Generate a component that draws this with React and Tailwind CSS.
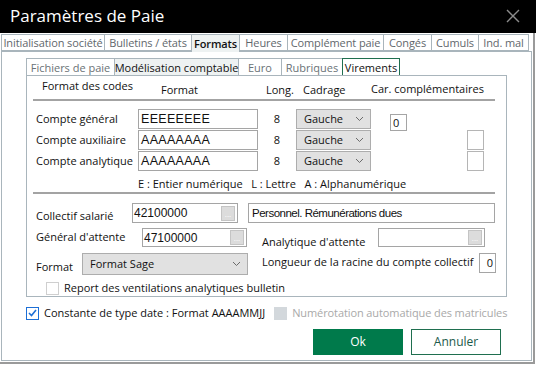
import React from 'react';

const FONT = { fontFamily: '"Open Sans", "Noto Sans", sans-serif' };
const MONO = { fontFamily: '"Liberation Sans", sans-serif' };

const Chevron = () => (
  <svg width="9" height="6" viewBox="0 0 9 6" className="shrink-0">
    <path d="M1 1 L4.5 4.5 L8 1" fill="none" stroke="#6b6b6b" strokeWidth="1" />
  </svg>
);

const DotsButton = () => (
  <div className="flex items-end justify-center w-[14px] h-[15px] bg-[#dcdcdc] border border-[#c4c4c4] text-[8px] leading-[8px] text-white pb-[2px]">
    ...
  </div>
);

const Select = ({ value, className = '' }) => (
  <div
    className={`flex items-center justify-between bg-[#e1e1e1] border border-[#adadad] pl-[7px] pr-[6px] text-[11px] text-[#111] ${className}`}
  >
    <span>{value}</span>
    <Chevron />
  </div>
);

const outerTabs = [
  { label: 'Initialisation société', w: 104 },
  { label: 'Bulletins / états', w: 87 },
  { label: 'Formats', w: 48, active: true },
  { label: 'Heures', w: 48 },
  { label: 'Complément paie', w: 96 },
  { label: 'Congés', w: 48 },
  { label: 'Cumuls', w: 47 },
  { label: 'Ind. mal', w: 50 },
];

const subTabs = [
  { label: 'Fichiers de paie', w: 89 },
  { label: 'Modélisation comptable', w: 124, active: true },
  { label: 'Euro', w: 43 },
  { label: 'Rubriques', w: 61 },
  { label: 'Virements', w: 58, focus: true },
];

const codeRows = [
  { label: 'Compte général', value: 'EEEEEEEE' },
  { label: 'Compte auxiliaire', value: 'AAAAAAAA' },
  { label: 'Compte analytique', value: 'AAAAAAAA' },
];

export default function App() {
  return (
    <div className="relative w-[536px] h-[366px] bg-white overflow-hidden" style={FONT}>
      {/* title bar */}
      <div className="flex items-center justify-between h-[33px] bg-black pl-[10px] pr-[16px]">
        <span className="text-white text-[17px] leading-none pb-[3px]">Paramètres de Paie</span>
        <svg width="14" height="14" viewBox="0 0 14 14" className="mb-[2px]">
          <path d="M1 1 L13 13 M13 1 L1 13" stroke="#8c8c8c" strokeWidth="1.4" />
        </svg>
      </div>

      <div className="flex flex-col w-[535px] h-[331px] border-r-[2px] border-b-[2px] border-[#9a9a9a]">
        {/* outer tabs */}
        <div className="flex pl-[1px] pt-[1px] h-[18px]">
          {outerTabs.map((t, i) => (
            <div
              key={t.label}
              style={{ width: t.w }}
              className={`flex items-center justify-center h-[17px] border-t border-r border-[#a9b5bc] text-[11px] leading-none whitespace-nowrap tracking-[-0.1px] ${
                i === 0 ? 'border-l' : ''
              } ${
                t.active ? 'bg-[#eef2f2] text-[#111] font-semibold h-[18px] relative z-10' : 'text-[#5f676c] border-b'
              }`}
            >
              {t.label}
            </div>
          ))}
        </div>

        {/* outer panel */}
        <div className="flex flex-col ml-[1px] w-[531px] h-[310px] border border-[#a9b5bc] pl-[24px]">
          {/* sub tabs */}
          <div className="flex mt-[6px] h-[17px]">
            {subTabs.map((t, i) => (
              <div
                key={t.label}
                style={{ width: t.w }}
                className={`flex items-center justify-center h-[17px] border-t border-r text-[11px] leading-none whitespace-nowrap ${
                  i === 0 ? 'border-l' : ''
                } ${t.focus ? 'border-l border-[#1f6f4f] -ml-[1px]' : 'border-[#a9b5bc]'} ${
                  t.active ? 'bg-[#eef2f2] text-[#111]' : t.focus ? 'text-[#111]' : 'text-[#6a7276]'
                }`}
              >
                {t.label}
              </div>
            ))}
          </div>

          {/* sub panel */}
          <div className="flex flex-col w-[481px] h-[222px] border border-[#a9b5bc] text-[11px] text-[#111]">
            {/* header */}
            <div className="flex h-[23px] pl-[15px] font-medium">
              <span className="w-[119px] pt-[1px] leading-[18px]">Format des codes</span>
              <span className="w-[105px] pt-[5px] leading-[18px]">Format</span>
              <span className="w-[37px] pt-[5px] leading-[18px]">Long.</span>
              <span className="w-[68px] pt-[5px] leading-[18px]">Cadrage</span>
              <span className="pt-[4px] leading-[18px]">Car. complémentaires</span>
            </div>
            <div className="ml-[6px] w-[462px] h-[2px] bg-[#a3a3a3]" />

            {/* code rows */}
            <div className="flex flex-col gap-[1px] mt-[8px] pl-[9px]">
              {codeRows.map((r, i) => (
                <div key={r.label} className="flex items-start h-[20px]">
                  <span className="w-[102px] leading-[20px] whitespace-nowrap">{r.label}</span>
                  <div
                    className="w-[120px] h-[20px] border border-[#a5a5a5] pl-[2px] leading-[18px] text-[12.5px] tracking-[0.3px]"
                    style={MONO}
                  >
                    {r.value}
                  </div>
                  <span className="w-[38px] text-center leading-[20px]">8</span>
                  <Select value="Gauche" className="w-[75px] h-[20px]" />
                  {i === 0 ? (
                    <div className="ml-[19px] mt-[5px] w-[17px] h-[17px] border border-[#a5a5a5] pl-[2px] leading-[15px]">
                      0
                    </div>
                  ) : (
                    <div className="ml-[96px] w-[17px] h-[20px] border border-[#b5b5b5]" />
                  )}
                </div>
              ))}
            </div>

            {/* legend */}
            <div className="mt-[6px] h-[14px] leading-[14px] pl-[111px] whitespace-pre">
              {'E : Entier numérique   L : Lettre   A : Alphanumérique'}
            </div>
            <div className="mt-[1px] ml-[6px] w-[462px] h-[2px] bg-[#a3a3a3]" />

            {/* collectif */}
            <div className="flex items-start mt-[9px] pl-[9px] h-[20px]">
              <span className="w-[96px] pt-[3px] leading-[20px] whitespace-nowrap">Collectif salarié</span>
              <div className="flex items-center justify-between w-[106px] h-[20px] border border-[#a5a5a5] pl-[1px] pr-[2px] text-[12px]">
                <span style={MONO}>42100000</span>
                <DotsButton />
              </div>
              <div
                className="ml-[10px] w-[247px] h-[20px] border border-[#a5a5a5] pl-[3px] leading-[18px] text-[11.5px] tracking-[-0.5px]"
                style={MONO}
              >
                Personnel. Rémunérations dues
              </div>
            </div>

            {/* general / analytique */}
            <div className="flex items-start mt-[5px] pl-[9px] h-[20px]">
              <span className="w-[106px] leading-[18px] whitespace-nowrap">Général d'attente</span>
              <div className="flex items-center justify-between w-[105px] h-[19px] border border-[#a5a5a5] pl-[1px] pr-[2px] text-[12px]">
                <span style={MONO}>47100000</span>
                <DotsButton />
              </div>
              <span className="ml-[15px] w-[116px] pt-[5px] leading-[18px] whitespace-nowrap">Analytique d'attente</span>
              <div className="flex items-center justify-end w-[107px] h-[19px] border border-[#a5a5a5] pr-[2px]">
                <DotsButton />
              </div>
            </div>

            {/* format / longueur */}
            <div className="flex items-start mt-[5px] pl-[9px] h-[23px]">
              <span className="w-[46px] pt-[5px] leading-[18px]">Format</span>
              <Select value="Format Sage" className="w-[166px] h-[22px]" />
              <span className="ml-[14px] w-[217px] leading-[18px] whitespace-nowrap">
                Longueur de la racine du compte collectif
              </span>
              <div className="w-[17px] h-[20px] border border-[#a5a5a5] pr-[2px] text-right leading-[18px]">0</div>
            </div>

            {/* report */}
            <div className="flex items-center mt-[5px] pl-[19px] h-[14px]">
              <div className="w-[13px] h-[13px] border border-[#cfcfcf]" />
              <span className="ml-[5px] leading-[14px]">Report des ventilations analytiques bulletin</span>
            </div>
          </div>

          {/* checkboxes */}
          <div className="flex items-center mt-[9px] h-[14px] text-[11px] whitespace-nowrap">
            <div className="flex items-center justify-center w-[13px] h-[13px] border border-[#1d6fd6]">
              <svg width="9" height="8" viewBox="0 0 9 8">
                <path d="M1 4 L3.5 6.5 L8 1" fill="none" stroke="#1d6fd6" strokeWidth="1.6" />
              </svg>
            </div>
            <span className="ml-[5px] text-[#111]">Constante de type date : Format AAAAMMJJ</span>
            <div className="ml-[9px] w-[13px] h-[13px] bg-[#d3d8dc]" />
            <span className="ml-[5px] text-[#a9a9a9] tracking-[-0.1px]">Numérotation automatique des matricules</span>
          </div>

          {/* buttons */}
          <div className="flex justify-end gap-[8px] mt-[9px] pr-[30px]">
            <button className="w-[90px] h-[26px] bg-[#007a4b] text-white text-[12px]">Ok</button>
            <button className="w-[90px] h-[26px] bg-white border border-[#1f6f4f] text-[#1c5a4a] text-[12px]">
              Annuler
            </button>
          </div>
        </div>
      </div>
    </div>
  );
}
